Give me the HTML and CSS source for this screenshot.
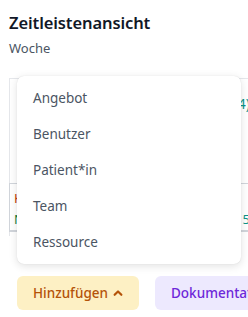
FILE: index.html
```html
<!DOCTYPE html>
<html lang="de">
<head>
    <meta charset="UTF-8">
    <meta name="viewport" content="width=device-width, initial-scale=1.0">
    <title>Zeitleistenansicht</title>
    <link rel="stylesheet" href="styles.css">
</head>
<body>
    <div class="page">
        <div class="header">
            <h1>Zeitleistenansicht</h1>
            <div class="subtitle">Woche</div>
        </div>

        <div class="card">
            <div class="card-head">
                <span class="count">Termine (4)</span>
            </div>
            <div class="table">
                <div class="row orange">
                    <span>Kontakt</span>
                    <span></span>
                </div>
                <div class="row green">
                    <span>Notiz</span>
                    <span class="num">5</span>
                </div>
            </div>
        </div>

        <div class="actions">
            <div class="add-wrap">
                <button class="btn add">
                    Hinzufügen
                    <svg class="caret" width="11" height="10" viewBox="0 0 11 10">
                        <path d="M1.8 7 L5.5 3.3 L9.2 7" fill="none" stroke="currentColor" stroke-width="2.4" stroke-linecap="round" stroke-linejoin="round"/>
                    </svg>
                </button>
                <div class="menu">
                    <div class="menu-item">Angebot</div>
                    <div class="menu-item">Benutzer</div>
                    <div class="menu-item">Patient*in</div>
                    <div class="menu-item">Team</div>
                    <div class="menu-item">Ressource</div>
                </div>
            </div>
            <button class="btn doc">Dokumentation</button>
        </div>
    </div>
</body>
</html>
```

FILE: styles.css
```css
* {
    margin: 0;
    padding: 0;
    box-sizing: border-box;
}

body {
    font-family: 'Noto Sans', 'Open Sans', sans-serif;
    background: #ffffff;
    color: #111827;
    width: 248px;
    height: 317px;
    overflow: hidden;
}

.page {
    padding: 11px 0 0 9px;
    width: 400px;
}

.header h1 {
    font-size: 16.5px;
    font-weight: 600;
    line-height: 24px;
    letter-spacing: -0.1px;
    color: #111827;
}

.subtitle {
    margin-top: 4px;
    font-size: 13px;
    line-height: 18px;
    color: #4b5563;
}

.card {
    margin-top: 21px;
    width: 300px;
    border-top: 1px solid #e5e7eb;
    border-left: 1px solid #e5e7eb;
    padding-bottom: 4px;
}

.card-head {
    height: 104px;
    padding: 15px 59px 0 0;
    display: flex;
    justify-content: flex-end;
}

.count {
    font-size: 14px;
    color: #0d9488;
}

.table {
    border: 1px solid #d1d5db;
    border-right: none;
    width: 300px;
    margin-left: -1px;
}

.row {
    display: flex;
    justify-content: space-between;
    height: 21px;
    align-items: center;
    padding: 0 59px 0 4px;
    font-size: 13px;
}

.row:first-child {
    margin-top: 3px;
}

.row:last-child {
    border-bottom: 1px solid #d1d5db;
    height: 23px;
}

.row.orange {
    color: #c2410c;
}

.row.green {
    color: #15803d;
}

.row .num {
    color: #0d9488;
}

.actions {
    margin-top: 40px;
    padding-left: 8px;
    display: flex;
    gap: 16px;
}

.add-wrap {
    position: relative;
}

.btn {
    height: 34px;
    border: none;
    border-radius: 6px;
    font-family: inherit;
    font-size: 13.5px;
    font-weight: 500;
    padding: 0 16px;
    display: flex;
    align-items: center;
    gap: 5px;
    white-space: nowrap;
}

.btn.add {
    background: #fdf0c4;
    color: #b45309;
    width: 122px;
}

.btn.doc {
    background: #ede9fe;
    color: #6d28d9;
}

.menu {
    position: absolute;
    left: 0;
    bottom: 46px;
    width: 224px;
    background: #ffffff;
    border-radius: 7px;
    box-shadow: 0 2px 8px rgba(0, 0, 0, 0.12), 0 0 1px rgba(0, 0, 0, 0.15);
    padding: 4px 0;
}

.menu-item {
    height: 36px;
    line-height: 36px;
    padding-left: 16px;
    font-size: 13.5px;
    color: #4b5563;
}
```
